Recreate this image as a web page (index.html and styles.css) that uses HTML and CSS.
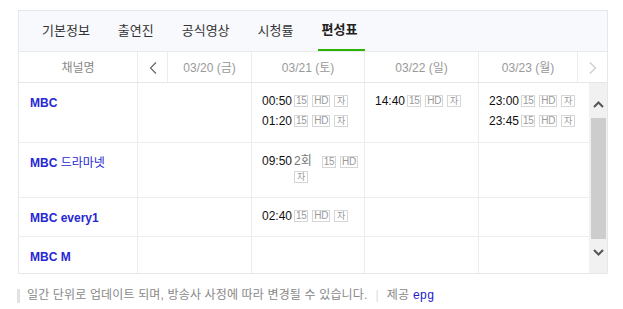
FILE: index.html
```html
<!DOCTYPE html>
<html lang="ko">
<head>
    <meta charset="UTF-8">
    <meta name="viewport" content="width=device-width, initial-scale=1.0">
    <title>편성표</title>
    <link rel="stylesheet" href="styles.css">
</head>
<body>
    <div class="panel">
        <!-- Tabs -->
        <ul class="tabs">
            <li class="tab">기본정보</li>
            <li class="tab">출연진</li>
            <li class="tab">공식영상</li>
            <li class="tab">시청률</li>
            <li class="tab on">편성표</li>
        </ul>

        <!-- Date header -->
        <div class="head">
            <div class="hcell">채널명</div>
            <div class="hcell nav">
                <svg width="8" height="12" viewBox="0 0 8 12"><path d="M7 0.5 L1.5 6 L7 11.5" fill="none" stroke="#666" stroke-width="1.2"/></svg>
            </div>
            <div class="hcell">03/20 (금)</div>
            <div class="hcell">03/21 (토)</div>
            <div class="hcell">03/22 (일)</div>
            <div class="hcell">03/23 (월)</div>
            <div class="hcell nav">
                <svg width="8" height="12" viewBox="0 0 8 12"><path d="M1 0.5 L6.5 6 L1 11.5" fill="none" stroke="#ccc" stroke-width="1.2"/></svg>
            </div>
        </div>

        <!-- Schedule body -->
        <div class="body">
            <div class="grid">
                <div class="row r1">
                    <div class="cell ch">MBC</div>
                    <div class="cell"></div>
                    <div class="cell">
                        <div class="prog"><span class="time">00:50</span><span class="info"><i class="bd">15</i><i class="bd">HD</i><i class="bd ko">자</i></span></div>
                        <div class="prog"><span class="time">01:20</span><span class="info"><i class="bd">15</i><i class="bd">HD</i><i class="bd ko">자</i></span></div>
                    </div>
                    <div class="cell">
                        <div class="prog"><span class="time">14:40</span><span class="info"><i class="bd">15</i><i class="bd">HD</i><i class="bd ko">자</i></span></div>
                    </div>
                    <div class="cell">
                        <div class="prog"><span class="time">23:00</span><span class="info"><i class="bd">15</i><i class="bd">HD</i><i class="bd ko">자</i></span></div>
                        <div class="prog"><span class="time">23:45</span><span class="info"><i class="bd">15</i><i class="bd">HD</i><i class="bd ko">자</i></span></div>
                    </div>
                </div>
                <div class="row r2">
                    <div class="cell ch">MBC <span class="ko">드라마넷</span></div>
                    <div class="cell"></div>
                    <div class="cell">
                        <div class="prog"><span class="time">09:50</span><span class="info"><span class="ep">2회</span><i class="bd">15</i><i class="bd">HD</i><i class="bd ko">자</i></span></div>
                    </div>
                    <div class="cell"></div>
                    <div class="cell"></div>
                </div>
                <div class="row r3">
                    <div class="cell ch">MBC every1</div>
                    <div class="cell"></div>
                    <div class="cell">
                        <div class="prog"><span class="time">02:40</span><span class="info"><i class="bd">15</i><i class="bd">HD</i><i class="bd ko">자</i></span></div>
                    </div>
                    <div class="cell"></div>
                    <div class="cell"></div>
                </div>
                <div class="row r4">
                    <div class="cell ch">MBC M</div>
                    <div class="cell"></div>
                    <div class="cell"></div>
                    <div class="cell"></div>
                    <div class="cell"></div>
                </div>
            </div>

            <!-- Scrollbar -->
            <div class="scroll">
                <svg class="arrow" width="11" height="7" viewBox="0 0 11 7"><path d="M1 6 L5.5 1.5 L10 6" fill="none" stroke="#555" stroke-width="2"/></svg>
                <div class="thumb"></div>
                <svg class="arrow" width="11" height="7" viewBox="0 0 11 7"><path d="M1 1 L5.5 5.5 L10 1" fill="none" stroke="#555" stroke-width="2"/></svg>
            </div>
        </div>
    </div>

    <p class="note">일간 단위로 업데이트 되며, 방송사 사정에 따라 변경될 수 있습니다.<span class="sep">|</span>제공 <span class="src">epg</span></p>
</body>
</html>
```

FILE: styles.css
```css
body {
    margin: 0;
    background: #ffffff;
    font-family: "Liberation Sans", "Noto Sans CJK KR", sans-serif;
    color: #333;
}

.panel {
    width: 590px;
    margin: 10px 0 0 18px;
    border: 1px solid #e4e7eb;
    box-sizing: border-box;
}

/* Tabs */
.tabs {
    display: flex;
    gap: 28px;
    height: 40px;
    margin: 0;
    padding: 0 0 0 23px;
    list-style: none;
    background: #f8f9fc;
    border-bottom: 1px solid #e6e9ed;
}

.tab {
    font-size: 13px;
    line-height: 40px;
    color: #333;
    white-space: nowrap;
}

.tab.on {
    font-weight: bold;
    color: #222;
    padding: 0 8px 0 3px;
    margin-left: -3px;
    margin-right: -8px;
    line-height: 38px;
    border-bottom: 2px solid #2db400;
}

/* Date header */
.head {
    display: grid;
    grid-template-columns: 118px 30px 84px 113px 114px 99px 30px;
    border-bottom: 1px solid #e6e6e6;
}

.hcell {
    height: 30px;
    box-sizing: border-box;
    padding-top: 2px;
    line-height: 28px;
    font-size: 12px;
    color: #999;
    text-align: center;
    white-space: nowrap;
}

.hcell + .hcell {
    border-left: 1px solid #ececec;
}

.hcell:first-child {
    color: #888;
}

.nav {
    display: flex;
    align-items: center;
    justify-content: center;
    padding-top: 1px;
}

/* Body */
.body {
    display: flex;
}

.grid {
    width: 570px;
}

.row {
    display: grid;
    grid-template-columns: 118px 114px 113px 114px 111px;
    border-bottom: 1px solid #ededed;
}

.row.r1 { height: 60px; }
.row.r2 { height: 55px; }
.row.r3 { height: 39px; }
.row.r4 { height: 36px; border-bottom: none; }

.row, .cell {
    box-sizing: border-box;
}

.cell {
    padding: 10px 2px 0 10px;
    font-size: 12px;
    line-height: 16px;
}

.cell + .cell {
    border-left: 1px solid #ececec;
}

.cell.ch {
    padding: 12px 0 0 11px;
    font-weight: bold;
    color: #2727d4;
}

.cell.ch .ko {
    font-weight: normal;
}

.prog {
    display: flex;
    align-items: flex-start;
    margin-bottom: 4px;
}

.time {
    flex: none;
    color: #111;
    margin-right: 2px;
}

.info {
    display: flex;
    flex-wrap: wrap;
    align-items: center;
    row-gap: 3px;
    column-gap: 4px;
    padding-top: 2px;
}

.ep {
    color: #777;
    line-height: 13px;
    margin-right: 6px;
}

.bd {
    font-style: normal;
    font-size: 10px;
    line-height: 10px;
    padding: 0 1px;
    letter-spacing: -0.4px;
    border: 1px solid #d6d6d6;
    color: #999;
}

.bd.ko {
    font-size: 9px;
    letter-spacing: 0;
    padding: 0 2px;
}

/* Scrollbar */
.scroll {
    width: 18px;
    display: flex;
    flex-direction: column;
    align-items: center;
    padding-top: 18px;
    background: #f1f1f1;
}

.thumb {
    width: 15px;
    height: 121px;
    margin: 10px 0 10px 1px;
    background: #cdcdcd;
}

/* Footer note */
.note {
    margin: 15px 0 0 17px;
    padding-left: 7px;
    border-left: 3px solid #e2e2e2;
    font-size: 12px;
    line-height: 13px;
    letter-spacing: 0.15px;
    color: #888;
}

.sep {
    margin: 0 8px;
    color: #dcdcdc;
}

.src {
    font-family: "Liberation Mono", monospace;
    font-size: 12px;
    letter-spacing: 0;
    color: #1818c8;
}
```
